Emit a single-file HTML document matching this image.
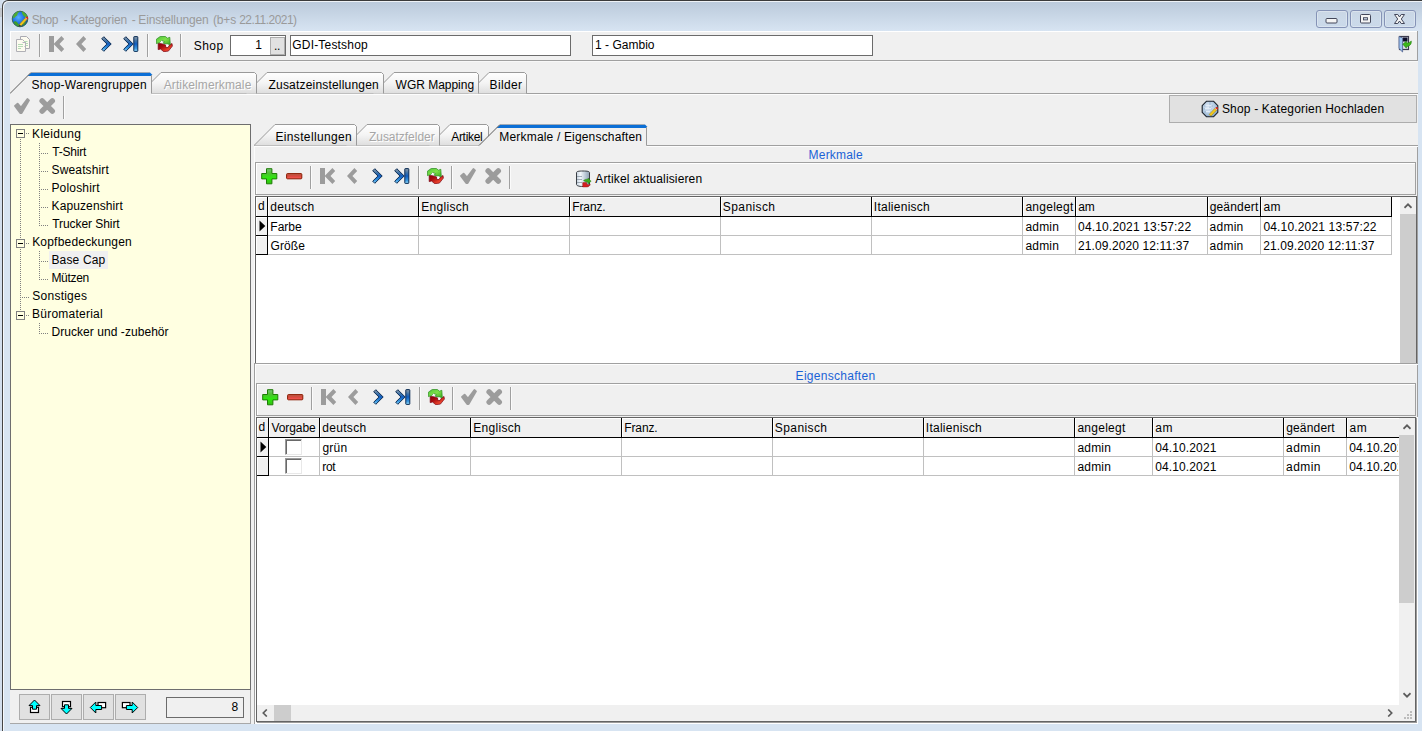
<!DOCTYPE html>
<html lang="de"><head><meta charset="utf-8"><title>Shop - Kategorien - Einstellungen</title>
<style>
html,body{margin:0;padding:0}
body{width:1422px;height:731px;overflow:hidden;position:relative;background:#d7e4f2;font:12px/14px "Liberation Sans",Arial,sans-serif;color:#000}
.a{position:absolute}
.t{position:absolute;white-space:nowrap;line-height:14px;height:14px}
.dis{color:#a6a6a6;text-shadow:1px 1px 0 #fff}
.inp{position:absolute;box-sizing:border-box;border:1px solid #6b6b6b;background:#fff}
.btn{position:absolute;box-sizing:border-box;border:1px solid #adadad;background:#e1e1e1}
.tbox{position:absolute;box-sizing:border-box;border:1px solid #a0a0a0;box-shadow:inset 1px 1px 0 #fff;background:#f0f0f0}
.grid{position:absolute;box-sizing:border-box;background:#fff;overflow:hidden}
.hc{position:absolute;box-sizing:border-box;background:#f0f0f0;border-right:1px solid #000;border-bottom:1px solid #000;box-shadow:inset 1px 1px 0 #fff}
.vl{position:absolute;width:1px;background:#c0c0c0}
.hl{position:absolute;height:1px;background:#c0c0c0}
.cb{position:absolute;box-sizing:border-box;width:17px;height:16px;background:#fff;border-top:1px solid #9a9a9a;border-left:1px solid #9a9a9a;border-right:1px solid #e8e8e8;border-bottom:1px solid #e8e8e8;box-shadow:inset 1px 1px 0 #696969}
</style></head><body>

<div class="a" style="left:0px;top:0px;width:2px;height:731px;background:#d2deed"></div>
<div class="a" style="left:0px;top:8px;width:2px;height:9px;background:#c3c7cd"></div>
<div class="a" style="left:2px;top:0;width:1430px;height:760px;box-sizing:border-box;border:1px solid #444;border-top-color:#3a3a3a;border-radius:6px 0 0 0;background:linear-gradient(#bccbdc 2px,#d7e4f2 30px);box-shadow:inset 1px 1px 0 rgba(255,255,255,.75)"></div>
<svg class="a" style="left:11px;top:10px" width="18" height="18" viewBox="0 0 18 18"><radialGradient id="gl" cx="0.4" cy="0.4" r="0.7"><stop offset="0" stop-color="#58b0ff"/><stop offset="0.6" stop-color="#1668e0"/><stop offset="1" stop-color="#0a3f9a"/></radialGradient><circle cx="9" cy="9" r="7.8" fill="url(#gl)" stroke="#2a5a3a" stroke-width="0.8"/><path d="M3 4.5C5 2 8 1.2 8.6 1.4 7 3 6 3.4 6.4 5 5.6 6.5 4.4 6 3.6 7.8 2 9 1.6 7 3 4.5z" fill="#4fae2e"/><path d="M10.5 1.5c3 .6 5.6 3 6 6.4-1.4 1.6-2 .2-3-1.4-1.2-.6-1.8-1.6-2.2-2.8z" fill="#4fae2e"/><path d="M2.6 12c1-1.4 2.6-.8 3.8.4.6 1.4 2 2 2.6 3.8-2.6.6-5.2-1.4-6.4-4.200z" fill="#3f9e28"/><path d="M12 13.5c1.2-.8 2.400-1 3.200-2.200-.4 2-1.800 3.600-3.600 4.600z" fill="#3f9e28"/><path d="M8.300 14.400 14.200 7.900 16 9.600 10 16z" fill="#f2c818" stroke="#a07808" stroke-width="0.5"/><path d="M14.200 7.900 15.400 6.700c.8-.4 2 .6 1.800 1.700L16 9.600z" fill="#e02818"/><path d="M14.500 7.600 16.300 9.300 16 9.600 14.200 7.900z" fill="#fff"/><path d="M8.300 14.400 7.700 16.600 10 16z" fill="#3a3a3a"/></svg>
<span class="t" id="ti1" style="top:13px;left:31.65px;letter-spacing:-0.405px;color:#9a9a9a;">Shop</span>
<span class="t" id="ti2" style="top:13px;left:63.86px;color:#9a9a9a;">-</span>
<span class="t" id="ti3" style="top:13px;left:70.6px;letter-spacing:-0.168px;color:#9a9a9a;">Kategorien</span>
<span class="t" id="ti4" style="top:13px;left:131.86px;color:#9a9a9a;">-</span>
<span class="t" id="ti5" style="top:13px;left:138.27px;letter-spacing:-0.130px;color:#9a9a9a;">Einstellungen</span>
<span class="t" id="ti6" style="top:13px;left:212.94px;letter-spacing:-0.117px;color:#9a9a9a;">(b+s</span>
<span class="t" id="ti7" style="top:13px;left:239.23px;letter-spacing:-0.528px;color:#9a9a9a;">22.11.2021)</span>
<div class="a" style="left:1316px;top:10px;width:32px;height:18px;box-sizing:border-box;border:1px solid #8593b6;border-radius:3px;background:linear-gradient(rgba(255,255,255,.10),rgba(255,255,255,0) 50%,rgba(120,150,190,.10));box-shadow:inset 0 0 0 1px rgba(255,255,255,.30)"><svg class="a" style="left:8px;top:6px" width="14" height="8" viewBox="0 0 14 8"><rect x="1" y="1.500" width="11" height="4.500" rx="1" fill="#f4f4f4" stroke="#43475a" stroke-width="1"/></svg></div>
<div class="a" style="left:1350px;top:10px;width:32px;height:18px;box-sizing:border-box;border:1px solid #8593b6;border-radius:3px;background:linear-gradient(rgba(255,255,255,.10),rgba(255,255,255,0) 50%,rgba(120,150,190,.10));box-shadow:inset 0 0 0 1px rgba(255,255,255,.30)"><svg class="a" style="left:8px;top:2px" width="14" height="12" viewBox="0 0 14 12"><rect x="1.500" y="1.500" width="10" height="8.500" rx="1" fill="#f4f4f4" stroke="#43475a" stroke-width="1"/><rect x="4.500" y="4.700" width="4" height="2.200" fill="#c9d6e6" stroke="#43475a" stroke-width="0.9"/></svg></div>
<div class="a" style="left:1384px;top:10px;width:32px;height:18px;box-sizing:border-box;border:1px solid #8593b6;border-radius:3px;background:linear-gradient(rgba(255,255,255,.10),rgba(255,255,255,0) 50%,rgba(120,150,190,.10));box-shadow:inset 0 0 0 1px rgba(255,255,255,.30)"><svg class="a" style="left:8px;top:2px" width="14" height="12" viewBox="0 0 14 12"><path d="M1.500 1.500h3.300L6.500 4l1.700-2.500h3.300L8.300 6l3.200 4.500H8.200L6.500 8l-1.700 2.500H1.500L4.700 6z" fill="#f4f4f4" stroke="#43475a" stroke-width="1" stroke-linejoin="round"/></svg></div>
<div class="a" style="left:10px;top:31px;width:1408px;height:693px;background:#f0f0f0"></div>
<div class="a" style="left:10px;top:723px;width:241px;height:1px;background:#a8a8a8"></div>
<div class="a" style="left:250px;top:690px;width:1px;height:33px;background:#a8a8a8"></div>
<div class="a" style="left:10px;top:31px;width:1408px;height:1px;background:#fff"></div>
<div class="a" style="left:10px;top:31px;width:1px;height:29px;background:#fff"></div>
<div class="a" style="left:10px;top:60px;width:1408px;height:1px;background:#a0a0a0"></div>
<div class="a" style="left:1417px;top:31px;width:1px;height:30px;background:#a0a0a0"></div>
<div class="a" style="left:10px;top:61px;width:1408px;height:1px;background:#f8f8f8"></div>
<svg class="a" style="left:16px;top:36px" width="15" height="16" viewBox="0 0 15 16"><path d="M4.500 0.500h6l3 3v9h-9z" fill="#fdfbf0" stroke="#aaaab2" stroke-width="1"/><path d="M0.500 3.500h6l3 3v9h-9z" fill="#fdfbf0" stroke="#b0b0b6" stroke-width="1"/><path d="M2 8.500h5M2 10.500h5M2 12.500h3M8 5.500h3.500M9.500 7.500h2.500M9.500 9.500h2.500" stroke="#b4dcb4" stroke-width="1"/><path d="M6.500 6.500h3v4h-1" fill="none" stroke="#b4b4bc" stroke-width="1"/></svg>
<div class="a" style="left:39px;top:34px;width:1px;height:23px;background:#a0a0a0"></div><div class="a" style="left:40px;top:34px;width:1px;height:23px;background:#fbfbfb"></div>
<svg class="a" style="left:49px;top:36px" width="16" height="16" viewBox="0 0 16 16"><path d="M0 0h5v16H0z M4.6 8 12.4 0l2.8 3-4.7 5 4.7 5-2.8 3z" fill="#9c9c9c"/></svg>
<svg class="a" style="left:76px;top:36px" width="16" height="16" viewBox="0 0 16 16"><path d="M0 8 7.4 0l2.8 3-4.8 5 4.8 5-2.8 3z" fill="#9c9c9c"/></svg>
<svg class="a" style="left:101px;top:36px" width="16" height="16" viewBox="0 0 16 16"><linearGradient id="bg1" x1="0" y1="0" x2="0" y2="1"><stop offset="0" stop-color="#929ca6"/><stop offset="0.3" stop-color="#3a70a8"/><stop offset="0.5" stop-color="#0f5cc0"/><stop offset="0.8" stop-color="#3a98e0"/><stop offset="1" stop-color="#9adcf8"/></linearGradient><path d="M0.7 2.8 2.8 0.7 10.200 8 2.8 15.300 0.7 13.200 5.900 8z" fill="url(#bg1)" stroke="#0a2c56" stroke-width="1" stroke-linejoin="round"/></svg>
<svg class="a" style="left:123px;top:36px" width="16" height="16" viewBox="0 0 16 16"><linearGradient id="bg2" x1="0" y1="0" x2="0" y2="1"><stop offset="0" stop-color="#929ca6"/><stop offset="0.3" stop-color="#3a70a8"/><stop offset="0.5" stop-color="#0f5cc0"/><stop offset="0.8" stop-color="#3a98e0"/><stop offset="1" stop-color="#9adcf8"/></linearGradient><path d="M0.7 2.8 2.8 0.7 10.200 8 2.8 15.300 0.7 13.200 5.900 8z" fill="url(#bg2)" stroke="#0a2c56" stroke-width="1" stroke-linejoin="round"/><rect x="10.800" y="0.600" width="4" height="14.800" rx="0.500" fill="url(#bg2)" stroke="#0a2c56" stroke-width="1"/></svg>
<div class="a" style="left:147px;top:34px;width:1px;height:23px;background:#a0a0a0"></div><div class="a" style="left:148px;top:34px;width:1px;height:23px;background:#fbfbfb"></div>
<svg class="a" style="left:156px;top:36px" width="17" height="16" viewBox="0 0 17 16"><linearGradient id="rg3a" x1="0" y1="0" x2="1" y2="1"><stop offset="0" stop-color="#4fc63a"/><stop offset="0.5" stop-color="#7fe04a"/><stop offset="1" stop-color="#3aa820"/></linearGradient><linearGradient id="rg3b" x1="0" y1="0" x2="1" y2="1"><stop offset="0" stop-color="#8a0008"/><stop offset="0.35" stop-color="#a80c10"/><stop offset="0.7" stop-color="#e8402a"/><stop offset="1" stop-color="#f06a50"/></linearGradient><path d="M2.2 7.2v6.4l2.4-.5 3.2 2.6 4.6-.6 4-5 -.4-2.6-2.6 1.6-1.4 2.4-2.6-.4.4-2-3.4-1.2z" fill="url(#rg3b)" stroke="#7a0010" stroke-width="0.7"/><path d="M0.4 3.2 4.2 0.5h5.2l2 1.7 2.4-.9.5 7.3-7.2-1.4 1.5-1.6-3-1-2 2-3.2 1z" fill="url(#rg3a)" stroke="#268a1c" stroke-width="0.7"/><circle cx="11.3" cy="9.6" r="1.1" fill="#fff"/><circle cx="5.6" cy="5.6" r="0.8" fill="#fff"/></svg>
<div class="a" style="left:180px;top:34px;width:1px;height:23px;background:#a0a0a0"></div><div class="a" style="left:181px;top:34px;width:1px;height:23px;background:#fbfbfb"></div>
<span class="t" id="shop" style="top:39px;left:193.66px;letter-spacing:0.470px;">Shop</span>
<div class="inp" style="left:230px;top:35px;width:56px;height:21px"></div>
<span class="t" id="one" style="top:38px;right:1160.06px;">1</span>
<div class="btn" style="left:270px;top:37px;width:15px;height:18px"></div>
<span class="t" id="dots" style="top:39px;left:274.05px;letter-spacing:-0.300px;">..</span>
<div class="inp" style="left:290px;top:35px;width:281px;height:21px"></div>
<span class="t" id="gdi" style="top:38px;left:292.3px;letter-spacing:0.184px;">GDI-Testshop</span>
<div class="inp" style="left:592px;top:35px;width:281px;height:21px"></div>
<span class="t" id="gambio" style="top:38px;left:595.09px;letter-spacing:0.005px;">1 - Gambio</span>
<svg class="a" style="left:1398px;top:35px" width="15" height="18" viewBox="0 0 15 18"><rect x="1.500" y="1.500" width="9" height="13" fill="#dfe3ea" stroke="#3c3c50" stroke-width="1.200"/><rect x="4.800" y="2.500" width="4.700" height="4" fill="#0c0c28"/><path d="M1 1.500 4.600 3v14L1 13.500z" fill="#9ec6f0" stroke="#4a5a8a" stroke-width="0.800"/><path d="M4.800 9.200 8.400 6.200v1.700c2 0 4-.6 4.800-2 .6 3.400-1.800 5.600-4.800 5.600v1.700z" fill="#3cb81a" stroke="#1c7a08" stroke-width="0.600"/></svg>
<svg class="a" style="left:10px;top:70px" width="1408" height="26" viewBox="10 70 1408 26"><linearGradient id="tg70" x1="0" y1="0" x2="0" y2="1"><stop offset="0" stop-color="#ffffff"/><stop offset="0.5" stop-color="#f4f4f4"/><stop offset="1" stop-color="#dedede"/></linearGradient><path d="M10 93.5H1418" stroke="#a0a0a0" stroke-width="1" fill="none"/><path d="M10 94.5H1418" stroke="#fdfdfd" stroke-width="1" fill="none"/><path d="M468 93.5 L489 72.5 H524.5 L526.5 74.5 V93.5Z" fill="url(#tg70)" stroke="none"/><path d="M468 93.5 L489 72.5 H524.5 L526.5 74.5 V93.5" fill="none" stroke="#9a9a9a" stroke-width="1"/><path d="M373 93.5 L394 72.5 H476.5 L478.5 74.5 V93.5Z" fill="url(#tg70)" stroke="none"/><path d="M373 93.5 L394 72.5 H476.5 L478.5 74.5 V93.5" fill="none" stroke="#9a9a9a" stroke-width="1"/><path d="M246 93.5 L267 72.5 H381.5 L383.5 74.5 V93.5Z" fill="url(#tg70)" stroke="none"/><path d="M246 93.5 L267 72.5 H381.5 L383.5 74.5 V93.5" fill="none" stroke="#9a9a9a" stroke-width="1"/><path d="M140 93.5 L161 72.5 H254.5 L256.5 74.5 V93.5Z" fill="url(#tg70)" stroke="none"/><path d="M140 93.5 L161 72.5 H254.5 L256.5 74.5 V93.5" fill="none" stroke="#9a9a9a" stroke-width="1"/><path d="M10 93.5 L31 72.5 H149.5 L151.5 74.5 V93.5 V95 H9Z" fill="#f0f0f0" stroke="none"/><path d="M27.5 76 L31.5 72.5 H150 L152 74.5 V76Z" fill="#0b6fd6"/><path d="M10 93.5 L31 72.5" fill="none" stroke="#5c5c5c" stroke-width="1"/><path d="M31 72.5 H149.5" fill="none" stroke="#b9a99a" stroke-width="1" opacity="0.6"/><path d="M151.5 75 V93.5" fill="none" stroke="#9a9a9a" stroke-width="1"/></svg>
<span class="t" id="tab1" style="top:78px;left:31.52px;letter-spacing:0.260px;">Shop-Warengruppen</span>
<span class="t dis" id="tab2" style="top:78px;left:163.69px;letter-spacing:0.114px;">Artikelmerkmale</span>
<span class="t" id="tab3" style="top:78px;left:268.52px;letter-spacing:0.190px;">Zusatzeinstellungen</span>
<span class="t" id="tab4" style="top:78px;left:395.58px;letter-spacing:-0.020px;">WGR Mapping</span>
<span class="t" id="tab5" style="top:78px;left:489.62px;letter-spacing:0.345px;">Bilder</span>
<svg class="a" style="left:14px;top:98px" width="16" height="16" viewBox="0 0 16 16"><path d="M1 8 3.6 5.6 7 9.6 13.4 1 15 2.4 7.6 15 6.2 15z" fill="#9c9c9c" stroke="#9c9c9c" stroke-width="1.8" stroke-linejoin="round"/></svg>
<svg class="a" style="left:39px;top:98px" width="17" height="16" viewBox="0 0 17 16"><path d="M3.1 2.9 13.3 13.100M13.3 2.9 3.1 13.100" fill="none" stroke="#9c9c9c" stroke-width="5.4" stroke-linecap="round"/></svg>
<div class="a" style="left:63px;top:96px;width:1px;height:23px;background:#a0a0a0"></div><div class="a" style="left:64px;top:96px;width:1px;height:23px;background:#fbfbfb"></div>
<div class="btn" style="left:1169px;top:95px;width:248px;height:28px"></div>
<svg class="a" style="left:1201px;top:100px" width="18" height="18" viewBox="0 0 18 18"><radialGradient id="gb" cx="0.4" cy="0.35" r="0.7"><stop offset="0" stop-color="#e4eefa"/><stop offset="0.7" stop-color="#a9c3dc"/><stop offset="1" stop-color="#7f9fc0"/></radialGradient><path d="M5.600 1.200h6.800l4.400 4.400v6.800l-4.400 4.400H5.600L1.200 12.400V5.600z" fill="url(#gb)" stroke="#1c222c" stroke-width="1.100" stroke-linejoin="round"/><path d="M3 6h9M2.600 9h8M3.400 12h6M9 2v8" stroke="#8aa6c4" stroke-width="0.700" fill="none"/><path d="M4.500 5h6v1.600h-6zM4 8h6v1.600H4zM5 11h4v1.400H5z" fill="#eef4fb" opacity=".8"/><path d="M8.200 14.400 14 8.200l1.800 1.700L10 16.100z" fill="#f0c81c" stroke="#9c7a0a" stroke-width="0.500"/><path d="M14 8.200 15.200 7c.9-.4 2 .6 1.800 1.700l-1.200 1.200z" fill="#d82818"/><path d="M14.300 7.900 16.100 9.600 15.800 9.900 14 8.200z" fill="#fff"/></svg>
<span class="t" id="upl" style="top:102px;left:1221.9px;letter-spacing:0.183px;">Shop - Kategorien Hochladen</span>
<div class="a" style="left:10px;top:124px;width:241px;height:566px;box-sizing:border-box;background:#ffffe1;border:1px solid #6e6e6e"></div>
<div class="a" style="left:49px;top:251px;width:59px;height:18px;background:#f0f0f0"></div>
<span class="t" id="tr0" style="top:127px;left:32.09px;letter-spacing:0.309px;">Kleidung</span>
<span class="t" id="tr1" style="top:145px;left:52.19px;letter-spacing:-0.182px;">T-Shirt</span>
<span class="t" id="tr2" style="top:163px;left:51.6px;letter-spacing:0.130px;">Sweatshirt</span>
<span class="t" id="tr3" style="top:181px;left:51.43px;letter-spacing:0.187px;">Poloshirt</span>
<span class="t" id="tr4" style="top:199px;left:51.55px;letter-spacing:0.106px;">Kapuzenshirt</span>
<span class="t" id="tr5" style="top:217px;left:52.19px;letter-spacing:-0.061px;">Trucker Shirt</span>
<span class="t" id="tr6" style="top:235px;left:32.17px;letter-spacing:0.203px;">Kopfbedeckungen</span>
<span class="t" id="tr7" style="top:253px;left:51.42px;letter-spacing:0.163px;">Base Cap</span>
<span class="t" id="tr8" style="top:271px;left:51.43px;letter-spacing:-0.300px;">Mützen</span>
<span class="t" id="tr9" style="top:289px;left:32.36px;letter-spacing:0.231px;">Sonstiges</span>
<span class="t" id="tr10" style="top:307px;left:32.06px;letter-spacing:0.231px;">Büromaterial</span>
<span class="t" id="tr11" style="top:325px;left:51.43px;letter-spacing:0.059px;">Drucker und -zubehör</span>
<svg class="a" style="left:10px;top:124px" width="60" height="230" viewBox="10 124 60 230" shape-rendering="crispEdges"><path d="M20.5 139V238" stroke="#808080" stroke-width="1" stroke-dasharray="1 1" fill="none"/><path d="M20.5 249V310" stroke="#808080" stroke-width="1" stroke-dasharray="1 1" fill="none"/><rect x="16.5" y="129.5" width="8" height="8" fill="#ffffe1" stroke="#808080" stroke-width="1"/><path d="M18 133.5H23" stroke="#000" stroke-width="1"/><path d="M26 133.5H29" stroke="#808080" stroke-width="1" stroke-dasharray="1 1" fill="none"/><rect x="16.5" y="239.5" width="8" height="8" fill="#ffffe1" stroke="#808080" stroke-width="1"/><path d="M18 243.5H23" stroke="#000" stroke-width="1"/><path d="M26 243.5H29" stroke="#808080" stroke-width="1" stroke-dasharray="1 1" fill="none"/><rect x="16.5" y="311.5" width="8" height="8" fill="#ffffe1" stroke="#808080" stroke-width="1"/><path d="M18 315.5H23" stroke="#000" stroke-width="1"/><path d="M26 315.5H29" stroke="#808080" stroke-width="1" stroke-dasharray="1 1" fill="none"/><path d="M20 297.5H29" stroke="#808080" stroke-width="1" stroke-dasharray="1 1" fill="none"/><path d="M39.5 143V226" stroke="#808080" stroke-width="1" stroke-dasharray="1 1" fill="none"/><path d="M39 153.5H48" stroke="#808080" stroke-width="1" stroke-dasharray="1 1" fill="none"/><path d="M39 171.5H48" stroke="#808080" stroke-width="1" stroke-dasharray="1 1" fill="none"/><path d="M39 189.5H48" stroke="#808080" stroke-width="1" stroke-dasharray="1 1" fill="none"/><path d="M39 207.5H48" stroke="#808080" stroke-width="1" stroke-dasharray="1 1" fill="none"/><path d="M39 225.5H48" stroke="#808080" stroke-width="1" stroke-dasharray="1 1" fill="none"/><path d="M39.5 251V280" stroke="#808080" stroke-width="1" stroke-dasharray="1 1" fill="none"/><path d="M39 261.5H48" stroke="#808080" stroke-width="1" stroke-dasharray="1 1" fill="none"/><path d="M39 279.5H48" stroke="#808080" stroke-width="1" stroke-dasharray="1 1" fill="none"/><path d="M39.5 323V334" stroke="#808080" stroke-width="1" stroke-dasharray="1 1" fill="none"/><path d="M39 333.5H48" stroke="#808080" stroke-width="1" stroke-dasharray="1 1" fill="none"/></svg>
<div class="btn" style="left:19px;top:694px;width:31px;height:26px"></div>
<div class="btn" style="left:51px;top:694px;width:31px;height:26px"></div>
<div class="btn" style="left:83px;top:694px;width:31px;height:26px"></div>
<div class="btn" style="left:115px;top:694px;width:31px;height:26px"></div>
<svg class="a" style="left:19px;top:694px" width="128" height="26" viewBox="19 694 128 26"><g stroke="#000" stroke-width="1.200" stroke-linejoin="miter"><rect x="30.500" y="707.300" width="8" height="5.200" fill="#fff"/><path d="M34.500 700 40 705.600H36.500V709.200H32.500V705.600H29z" fill="#00ffff" stroke-width="1"/><rect x="62.500" y="701.500" width="8" height="5.200" fill="#fff"/><path d="M66.500 714 72 708.400H68.500V704.800H64.500V708.400H61z" fill="#00ffff" stroke-width="1"/><rect x="98" y="702.500" width="7.600" height="5.200" fill="#fff"/><path d="M90.300 707.500 95.800 702V705.500H101.600V709.500H95.800V713z" fill="#00ffff" stroke-width="1"/><rect x="122.400" y="702.500" width="7.600" height="5.200" fill="#fff"/><path d="M137.700 707.500 132.200 702V705.500H126.400V709.500H132.200V713z" fill="#00ffff" stroke-width="1"/></g></svg>
<div class="a" style="left:166px;top:697px;width:78px;height:21px;box-sizing:border-box;border:1px solid #6b6b6b;background:#f0f0f0"></div>
<span class="t" id="eight" style="top:700px;right:1183.87px;">8</span>
<div class="a" style="left:254px;top:146px;width:1px;height:217px;background:#fbfbfb"></div>
<div class="a" style="left:254px;top:363px;width:1px;height:361px;background:#a0a0a0"></div>
<div class="a" style="left:255px;top:364px;width:1px;height:360px;background:#fdfdfd"></div>
<div class="a" style="left:1417px;top:146px;width:1px;height:578px;background:#a0a0a0"></div>
<svg class="a" style="left:254px;top:122px" width="1164" height="26" viewBox="254 122 1164 26"><linearGradient id="tg122" x1="0" y1="0" x2="0" y2="1"><stop offset="0" stop-color="#ffffff"/><stop offset="0.5" stop-color="#f4f4f4"/><stop offset="1" stop-color="#dedede"/></linearGradient><path d="M254 145.5H1418" stroke="#a0a0a0" stroke-width="1" fill="none"/><path d="M254 146.5H1418" stroke="#fdfdfd" stroke-width="1" fill="none"/><path d="M429 145.5 L450 124.5 H486.5 L488.5 126.5 V145.5Z" fill="url(#tg122)" stroke="none"/><path d="M429 145.5 L450 124.5 H486.5 L488.5 126.5 V145.5" fill="none" stroke="#9a9a9a" stroke-width="1"/><path d="M346 145.5 L367 124.5 H437.5 L439.5 126.5 V145.5Z" fill="url(#tg122)" stroke="none"/><path d="M346 145.5 L367 124.5 H437.5 L439.5 126.5 V145.5" fill="none" stroke="#9a9a9a" stroke-width="1"/><path d="M254 145.5 L275 124.5 H354.5 L356.5 126.5 V145.5Z" fill="url(#tg122)" stroke="none"/><path d="M254 145.5 L275 124.5 H354.5 L356.5 126.5 V145.5" fill="none" stroke="#9a9a9a" stroke-width="1"/><path d="M479 145.5 L500 124.5 H644.5 L646.5 126.5 V145.5 V147 H478Z" fill="#f0f0f0" stroke="none"/><path d="M496.5 128 L500.5 124.5 H645 L647 126.5 V128Z" fill="#0b6fd6"/><path d="M479 145.5 L500 124.5" fill="none" stroke="#5c5c5c" stroke-width="1"/><path d="M500 124.5 H644.5" fill="none" stroke="#b9a99a" stroke-width="1" opacity="0.6"/><path d="M646.5 127 V145.5" fill="none" stroke="#9a9a9a" stroke-width="1"/></svg>
<span class="t" id="it1" style="top:130px;left:275.45px;letter-spacing:0.349px;">Einstellungen</span>
<span class="t dis" id="it2" style="top:130px;left:368.94px;letter-spacing:-0.024px;">Zusatzfelder</span>
<span class="t" id="it3" style="top:130px;left:451.21px;letter-spacing:-0.300px;">Artikel</span>
<span class="t" id="it4" style="top:130px;left:499.36px;letter-spacing:0.171px;">Merkmale / Eigenschaften</span>
<span class="t" id="lbl1" style="top:148px;left:808.6px;letter-spacing:0.194px;color:#1a62d6;">Merkmale</span>
<span class="t" id="lbl2" style="top:369px;left:795.6px;letter-spacing:0.287px;color:#1a62d6;">Eigenschaften</span>
<div class="tbox" style="left:255px;top:162px;width:1161px;height:33px"></div>
<svg class="a" style="left:261px;top:168px" width="17" height="17" viewBox="0 0 17 17"><linearGradient id="pg4" x1="0" y1="0" x2="0" y2="1"><stop offset="0" stop-color="#7cc47a"/><stop offset="0.3" stop-color="#4cc030"/><stop offset="0.62" stop-color="#2cea0c"/><stop offset="1" stop-color="#34bc14"/></linearGradient><path d="M5.5 0.7h5.4v4.8h4.9v5.4h-4.9v4.9H5.5v-4.9H0.7V5.5h4.8z" fill="url(#pg4)" stroke="#1d7d04" stroke-width="1" stroke-linejoin="round"/></svg>
<svg class="a" style="left:286px;top:173px" width="17" height="7" viewBox="0 0 17 7"><linearGradient id="mg5" x1="0" y1="0" x2="0" y2="1"><stop offset="0" stop-color="#b8644c"/><stop offset="0.45" stop-color="#d4483c"/><stop offset="1" stop-color="#ff5a58"/></linearGradient><rect x="0.6" y="0.6" width="15.2" height="5.2" rx="0.8" fill="url(#mg5)" stroke="#8a1c02" stroke-width="1"/></svg>
<div class="a" style="left:310px;top:166px;width:1px;height:23px;background:#a0a0a0"></div><div class="a" style="left:311px;top:166px;width:1px;height:23px;background:#fbfbfb"></div>
<svg class="a" style="left:320px;top:168px" width="16" height="16" viewBox="0 0 16 16"><path d="M0 0h5v16H0z M4.6 8 12.4 0l2.8 3-4.7 5 4.7 5-2.8 3z" fill="#9c9c9c"/></svg>
<svg class="a" style="left:347px;top:168px" width="16" height="16" viewBox="0 0 16 16"><path d="M0 8 7.4 0l2.8 3-4.8 5 4.8 5-2.8 3z" fill="#9c9c9c"/></svg>
<svg class="a" style="left:372px;top:168px" width="16" height="16" viewBox="0 0 16 16"><linearGradient id="bg6" x1="0" y1="0" x2="0" y2="1"><stop offset="0" stop-color="#929ca6"/><stop offset="0.3" stop-color="#3a70a8"/><stop offset="0.5" stop-color="#0f5cc0"/><stop offset="0.8" stop-color="#3a98e0"/><stop offset="1" stop-color="#9adcf8"/></linearGradient><path d="M0.7 2.8 2.8 0.7 10.200 8 2.8 15.300 0.7 13.200 5.900 8z" fill="url(#bg6)" stroke="#0a2c56" stroke-width="1" stroke-linejoin="round"/></svg>
<svg class="a" style="left:394px;top:168px" width="16" height="16" viewBox="0 0 16 16"><linearGradient id="bg7" x1="0" y1="0" x2="0" y2="1"><stop offset="0" stop-color="#929ca6"/><stop offset="0.3" stop-color="#3a70a8"/><stop offset="0.5" stop-color="#0f5cc0"/><stop offset="0.8" stop-color="#3a98e0"/><stop offset="1" stop-color="#9adcf8"/></linearGradient><path d="M0.7 2.8 2.8 0.7 10.200 8 2.8 15.300 0.7 13.200 5.900 8z" fill="url(#bg7)" stroke="#0a2c56" stroke-width="1" stroke-linejoin="round"/><rect x="10.800" y="0.600" width="4" height="14.800" rx="0.500" fill="url(#bg7)" stroke="#0a2c56" stroke-width="1"/></svg>
<div class="a" style="left:418px;top:166px;width:1px;height:23px;background:#a0a0a0"></div><div class="a" style="left:419px;top:166px;width:1px;height:23px;background:#fbfbfb"></div>
<svg class="a" style="left:427px;top:168px" width="17" height="16" viewBox="0 0 17 16"><linearGradient id="rg8a" x1="0" y1="0" x2="1" y2="1"><stop offset="0" stop-color="#4fc63a"/><stop offset="0.5" stop-color="#7fe04a"/><stop offset="1" stop-color="#3aa820"/></linearGradient><linearGradient id="rg8b" x1="0" y1="0" x2="1" y2="1"><stop offset="0" stop-color="#8a0008"/><stop offset="0.35" stop-color="#a80c10"/><stop offset="0.7" stop-color="#e8402a"/><stop offset="1" stop-color="#f06a50"/></linearGradient><path d="M2.2 7.2v6.4l2.4-.5 3.2 2.6 4.6-.6 4-5 -.4-2.6-2.6 1.6-1.4 2.4-2.6-.4.4-2-3.4-1.2z" fill="url(#rg8b)" stroke="#7a0010" stroke-width="0.7"/><path d="M0.4 3.2 4.2 0.5h5.2l2 1.7 2.4-.9.5 7.3-7.2-1.4 1.5-1.6-3-1-2 2-3.2 1z" fill="url(#rg8a)" stroke="#268a1c" stroke-width="0.7"/><circle cx="11.3" cy="9.6" r="1.1" fill="#fff"/><circle cx="5.6" cy="5.6" r="0.8" fill="#fff"/></svg>
<div class="a" style="left:451px;top:166px;width:1px;height:23px;background:#a0a0a0"></div><div class="a" style="left:452px;top:166px;width:1px;height:23px;background:#fbfbfb"></div>
<svg class="a" style="left:460px;top:168px" width="16" height="16" viewBox="0 0 16 16"><path d="M1 8 3.6 5.6 7 9.6 13.4 1 15 2.4 7.6 15 6.2 15z" fill="#9c9c9c" stroke="#9c9c9c" stroke-width="1.8" stroke-linejoin="round"/></svg>
<svg class="a" style="left:485px;top:168px" width="17" height="16" viewBox="0 0 17 16"><path d="M3.1 2.9 13.3 13.100M13.3 2.9 3.1 13.100" fill="none" stroke="#9c9c9c" stroke-width="5.4" stroke-linecap="round"/></svg>
<div class="a" style="left:509px;top:166px;width:1px;height:23px;background:#a0a0a0"></div><div class="a" style="left:510px;top:166px;width:1px;height:23px;background:#fbfbfb"></div>
<svg class="a" style="left:575px;top:170px" width="17" height="18" viewBox="0 0 17 18"><linearGradient id="db" x1="0" y1="0" x2="1" y2="0"><stop offset="0" stop-color="#c4d0dc"/><stop offset="0.3" stop-color="#f4f8fc"/><stop offset="0.7" stop-color="#b8c6d4"/><stop offset="1" stop-color="#8fa0b2"/></linearGradient><path d="M1.500 2.500c0-1 2-1.500 6.500-1.500s6.500.5 6.500 1.500v12c0 1-2 2-6.500 2s-6.500-1-6.500-2z" fill="url(#db)" stroke="#3a3e44" stroke-width="1"/><path d="M2 6.500h5M2 9.500h5M2 12.500h5" stroke="#8c98a6" stroke-width="0.800"/><path d="M8.500 10.500c1.500-1.200 3-1.500 4.500-1.200V8l3.200 3.200-3.200 2.600v-1.500c-1.500-.5-3 -.4-4.500-1.800z" fill="#3caa1c" stroke="#1c7a08" stroke-width="0.400"/><path d="M7.700 17V12.600h4v1.500c1 .8 2.400.8 3.600.2-.5 1.800-1.800 2.700-3.600 2.700z" fill="#d42020" stroke="#8c0c0c" stroke-width="0.400"/></svg>
<span class="t" id="artakt" style="top:172px;left:595.25px;letter-spacing:0.140px;">Artikel aktualisieren</span>
<div class="tbox" style="left:256px;top:383px;width:1160px;height:33px"></div>
<svg class="a" style="left:262px;top:389px" width="17" height="17" viewBox="0 0 17 17"><linearGradient id="pg9" x1="0" y1="0" x2="0" y2="1"><stop offset="0" stop-color="#7cc47a"/><stop offset="0.3" stop-color="#4cc030"/><stop offset="0.62" stop-color="#2cea0c"/><stop offset="1" stop-color="#34bc14"/></linearGradient><path d="M5.5 0.7h5.4v4.8h4.9v5.4h-4.9v4.9H5.5v-4.9H0.7V5.5h4.8z" fill="url(#pg9)" stroke="#1d7d04" stroke-width="1" stroke-linejoin="round"/></svg>
<svg class="a" style="left:287px;top:394px" width="17" height="7" viewBox="0 0 17 7"><linearGradient id="mg10" x1="0" y1="0" x2="0" y2="1"><stop offset="0" stop-color="#b8644c"/><stop offset="0.45" stop-color="#d4483c"/><stop offset="1" stop-color="#ff5a58"/></linearGradient><rect x="0.6" y="0.6" width="15.2" height="5.2" rx="0.8" fill="url(#mg10)" stroke="#8a1c02" stroke-width="1"/></svg>
<div class="a" style="left:311px;top:387px;width:1px;height:23px;background:#a0a0a0"></div><div class="a" style="left:312px;top:387px;width:1px;height:23px;background:#fbfbfb"></div>
<svg class="a" style="left:321px;top:389px" width="16" height="16" viewBox="0 0 16 16"><path d="M0 0h5v16H0z M4.6 8 12.4 0l2.8 3-4.7 5 4.7 5-2.8 3z" fill="#9c9c9c"/></svg>
<svg class="a" style="left:348px;top:389px" width="16" height="16" viewBox="0 0 16 16"><path d="M0 8 7.4 0l2.8 3-4.8 5 4.8 5-2.8 3z" fill="#9c9c9c"/></svg>
<svg class="a" style="left:373px;top:389px" width="16" height="16" viewBox="0 0 16 16"><linearGradient id="bg11" x1="0" y1="0" x2="0" y2="1"><stop offset="0" stop-color="#929ca6"/><stop offset="0.3" stop-color="#3a70a8"/><stop offset="0.5" stop-color="#0f5cc0"/><stop offset="0.8" stop-color="#3a98e0"/><stop offset="1" stop-color="#9adcf8"/></linearGradient><path d="M0.7 2.8 2.8 0.7 10.200 8 2.8 15.300 0.7 13.200 5.900 8z" fill="url(#bg11)" stroke="#0a2c56" stroke-width="1" stroke-linejoin="round"/></svg>
<svg class="a" style="left:395px;top:389px" width="16" height="16" viewBox="0 0 16 16"><linearGradient id="bg12" x1="0" y1="0" x2="0" y2="1"><stop offset="0" stop-color="#929ca6"/><stop offset="0.3" stop-color="#3a70a8"/><stop offset="0.5" stop-color="#0f5cc0"/><stop offset="0.8" stop-color="#3a98e0"/><stop offset="1" stop-color="#9adcf8"/></linearGradient><path d="M0.7 2.8 2.8 0.7 10.200 8 2.8 15.300 0.7 13.200 5.900 8z" fill="url(#bg12)" stroke="#0a2c56" stroke-width="1" stroke-linejoin="round"/><rect x="10.800" y="0.600" width="4" height="14.800" rx="0.500" fill="url(#bg12)" stroke="#0a2c56" stroke-width="1"/></svg>
<div class="a" style="left:419px;top:387px;width:1px;height:23px;background:#a0a0a0"></div><div class="a" style="left:420px;top:387px;width:1px;height:23px;background:#fbfbfb"></div>
<svg class="a" style="left:428px;top:389px" width="17" height="16" viewBox="0 0 17 16"><linearGradient id="rg13a" x1="0" y1="0" x2="1" y2="1"><stop offset="0" stop-color="#4fc63a"/><stop offset="0.5" stop-color="#7fe04a"/><stop offset="1" stop-color="#3aa820"/></linearGradient><linearGradient id="rg13b" x1="0" y1="0" x2="1" y2="1"><stop offset="0" stop-color="#8a0008"/><stop offset="0.35" stop-color="#a80c10"/><stop offset="0.7" stop-color="#e8402a"/><stop offset="1" stop-color="#f06a50"/></linearGradient><path d="M2.2 7.2v6.4l2.4-.5 3.2 2.6 4.6-.6 4-5 -.4-2.6-2.6 1.6-1.4 2.4-2.6-.4.4-2-3.4-1.2z" fill="url(#rg13b)" stroke="#7a0010" stroke-width="0.7"/><path d="M0.4 3.2 4.2 0.5h5.2l2 1.7 2.4-.9.5 7.3-7.2-1.4 1.5-1.6-3-1-2 2-3.2 1z" fill="url(#rg13a)" stroke="#268a1c" stroke-width="0.7"/><circle cx="11.3" cy="9.6" r="1.1" fill="#fff"/><circle cx="5.6" cy="5.6" r="0.8" fill="#fff"/></svg>
<div class="a" style="left:452px;top:387px;width:1px;height:23px;background:#a0a0a0"></div><div class="a" style="left:453px;top:387px;width:1px;height:23px;background:#fbfbfb"></div>
<svg class="a" style="left:461px;top:389px" width="16" height="16" viewBox="0 0 16 16"><path d="M1 8 3.6 5.6 7 9.6 13.4 1 15 2.4 7.6 15 6.2 15z" fill="#9c9c9c" stroke="#9c9c9c" stroke-width="1.8" stroke-linejoin="round"/></svg>
<svg class="a" style="left:486px;top:389px" width="17" height="16" viewBox="0 0 17 16"><path d="M3.1 2.9 13.3 13.100M13.3 2.9 3.1 13.100" fill="none" stroke="#9c9c9c" stroke-width="5.4" stroke-linecap="round"/></svg>
<div class="a" style="left:510px;top:387px;width:1px;height:23px;background:#a0a0a0"></div><div class="a" style="left:511px;top:387px;width:1px;height:23px;background:#fbfbfb"></div>
<div class="a" style="left:255px;top:363px;width:1163px;height:1px;background:#a0a0a0"></div>
<div class="a" style="left:255px;top:364px;width:1163px;height:1px;background:#fdfdfd"></div>
<div class="grid" style="left:255px;top:196px;width:1162px;height:167px;border-left:1px solid #646464;border-top:1px solid #646464;border-right:1px solid #646464"></div>
<div class="hc" style="left:256px;top:197px;width:12px;height:20px"></div>
<span class="t" id="uh0" style="top:199px;left:258.03px;">d</span>
<div class="hc" style="left:268px;top:197px;width:151px;height:20px"></div>
<span class="t" id="uh1" style="top:200px;left:270.2px;letter-spacing:0.320px;">deutsch</span>
<div class="vl" style="left:418px;top:217px;height:38px"></div>
<div class="hc" style="left:419px;top:197px;width:151px;height:20px"></div>
<span class="t" id="uh2" style="top:200px;left:421.29px;letter-spacing:0.297px;">Englisch</span>
<div class="vl" style="left:569px;top:217px;height:38px"></div>
<div class="hc" style="left:570px;top:197px;width:151px;height:20px"></div>
<span class="t" id="uh3" style="top:200px;left:572.29px;letter-spacing:-0.132px;">Franz.</span>
<div class="vl" style="left:720px;top:217px;height:38px"></div>
<div class="hc" style="left:721px;top:197px;width:151px;height:20px"></div>
<span class="t" id="uh4" style="top:200px;left:722.84px;letter-spacing:0.402px;">Spanisch</span>
<div class="vl" style="left:871px;top:217px;height:38px"></div>
<div class="hc" style="left:872px;top:197px;width:151px;height:20px"></div>
<span class="t" id="uh5" style="top:200px;left:873.86px;letter-spacing:0.251px;">Italienisch</span>
<div class="vl" style="left:1022px;top:217px;height:38px"></div>
<div class="hc" style="left:1023px;top:197px;width:53px;height:20px"></div>
<span class="t" id="uh6" style="top:200px;left:1025.46px;letter-spacing:0.248px;">angelegt</span>
<div class="vl" style="left:1075px;top:217px;height:38px"></div>
<div class="hc" style="left:1076px;top:197px;width:132px;height:20px"></div>
<span class="t" id="uh7" style="top:200px;left:1078.32px;letter-spacing:-0.128px;">am</span>
<div class="vl" style="left:1207px;top:217px;height:38px"></div>
<div class="hc" style="left:1208px;top:197px;width:53px;height:20px"></div>
<span class="t" id="uh8" style="top:200px;left:1209.67px;letter-spacing:0.183px;">geändert</span>
<div class="vl" style="left:1260px;top:217px;height:38px"></div>
<div class="hc" style="left:1261px;top:197px;width:131px;height:20px"></div>
<span class="t" id="uh9" style="top:200px;left:1263.51px;letter-spacing:0.253px;">am</span>
<div class="vl" style="left:1391px;top:217px;height:38px"></div>
<div class="hc" style="left:256px;top:217px;width:12px;height:19px"></div>
<div class="hl" style="left:268px;top:235px;width:1124px"></div>
<div class="hc" style="left:256px;top:236px;width:12px;height:19px"></div>
<div class="hl" style="left:268px;top:254px;width:1124px"></div>
<svg class="a" style="left:259px;top:220px" width="7" height="12" viewBox="0 0 7 12"><path d="M0.500 0.500 6.300 6 0.500 11.500z" fill="#000"/></svg>
<span class="t" id="u0a" style="top:220px;left:270.34px;letter-spacing:-0.026px;">Farbe</span>
<span class="t" id="u0b" style="top:220px;left:1025.5px;letter-spacing:0.168px;">admin</span>
<span class="t" id="u0c" style="top:220px;left:1078.05px;letter-spacing:0.165px;">04.10.2021 13:57:22</span>
<span class="t" id="u0d" style="top:220px;left:1209.54px;letter-spacing:0.256px;">admin</span>
<span class="t" id="u0e" style="top:220px;left:1263.44px;letter-spacing:0.163px;">04.10.2021 13:57:22</span>
<span class="t" id="u1a" style="top:239px;left:270.62px;letter-spacing:0.063px;">Größe</span>
<span class="t" id="u1b" style="top:239px;left:1025.5px;letter-spacing:0.168px;">admin</span>
<span class="t" id="u1c" style="top:239px;left:1077.9px;letter-spacing:0.113px;">21.09.2020 12:11:37</span>
<span class="t" id="u1d" style="top:239px;left:1209.54px;letter-spacing:0.256px;">admin</span>
<span class="t" id="u1e" style="top:239px;left:1263.19px;letter-spacing:0.111px;">21.09.2020 12:11:37</span>
<div class="a" style="left:1400px;top:197px;width:16px;height:166px;background:#f0f0f0"></div>
<div class="a" style="left:1400px;top:214px;width:16px;height:149px;background:#cdcdcd"></div>
<svg class="a" style="left:1404px;top:203px" width="8" height="6" viewBox="0 0 8 6"><path d="M0.500 4.800 4 1.300 7.500 4.800" fill="none" stroke="#5c5c5c" stroke-width="1.700"/></svg>
<div class="grid" style="left:256px;top:417px;width:1160px;height:305px;border:1px solid #646464"></div>
<div class="a" style="left:1416px;top:418px;width:1px;height:305px;background:#9a9a9a"></div>
<div class="a" style="left:1417px;top:417px;width:1px;height:307px;background:#fff"></div>
<div class="a" style="left:257px;top:722px;width:1160px;height:1px;background:#9a9a9a"></div>
<div class="a" style="left:255px;top:723px;width:1163px;height:1px;background:#fff"></div>
<div class="hc" style="left:257px;top:418px;width:12px;height:20px;"></div>
<span class="t" id="lh0" style="top:420px;left:258.44px;">d</span>
<div class="hc" style="left:269px;top:418px;width:51px;height:20px;"></div>
<span class="t" id="lh1" style="top:421px;left:271.41px;letter-spacing:-0.058px;">Vorgabe</span>
<div class="vl" style="left:319px;top:438px;height:38px"></div>
<div class="hc" style="left:320px;top:418px;width:151px;height:20px;"></div>
<span class="t" id="lh2" style="top:421px;left:322.2px;letter-spacing:0.320px;">deutsch</span>
<div class="vl" style="left:470px;top:438px;height:38px"></div>
<div class="hc" style="left:471px;top:418px;width:151px;height:20px;"></div>
<span class="t" id="lh3" style="top:421px;left:473.29px;letter-spacing:0.297px;">Englisch</span>
<div class="vl" style="left:621px;top:438px;height:38px"></div>
<div class="hc" style="left:622px;top:418px;width:151px;height:20px;"></div>
<span class="t" id="lh4" style="top:421px;left:624.29px;letter-spacing:-0.132px;">Franz.</span>
<div class="vl" style="left:772px;top:438px;height:38px"></div>
<div class="hc" style="left:773px;top:418px;width:151px;height:20px;"></div>
<span class="t" id="lh5" style="top:421px;left:774.84px;letter-spacing:0.402px;">Spanisch</span>
<div class="vl" style="left:923px;top:438px;height:38px"></div>
<div class="hc" style="left:924px;top:418px;width:151px;height:20px;"></div>
<span class="t" id="lh6" style="top:421px;left:925.86px;letter-spacing:0.251px;">Italienisch</span>
<div class="vl" style="left:1074px;top:438px;height:38px"></div>
<div class="hc" style="left:1075px;top:418px;width:78px;height:20px;"></div>
<span class="t" id="lh7" style="top:421px;left:1077.46px;letter-spacing:0.248px;">angelegt</span>
<div class="vl" style="left:1152px;top:438px;height:38px"></div>
<div class="hc" style="left:1153px;top:418px;width:131px;height:20px;"></div>
<span class="t" id="lh8" style="top:421px;left:1155.28px;letter-spacing:0.500px;">am</span>
<div class="vl" style="left:1283px;top:438px;height:38px"></div>
<div class="hc" style="left:1284px;top:418px;width:63px;height:20px;"></div>
<span class="t" id="lh9" style="top:421px;left:1286.2px;letter-spacing:0.164px;">geändert</span>
<div class="vl" style="left:1346px;top:438px;height:38px"></div>
<div class="hc" style="left:1347px;top:418px;width:52px;height:20px;border-right:none;"></div>
<span class="t" id="lh10" style="top:421px;left:1349.46px;letter-spacing:0.500px;">am</span>
<div class="hc" style="left:257px;top:438px;width:12px;height:19px"></div>
<div class="hl" style="left:269px;top:456px;width:1130px"></div>
<div class="cb" style="left:285px;top:439px"></div>
<div class="hc" style="left:257px;top:457px;width:12px;height:19px"></div>
<div class="hl" style="left:269px;top:475px;width:1130px"></div>
<div class="cb" style="left:285px;top:458px"></div>
<svg class="a" style="left:260px;top:441px" width="7" height="12" viewBox="0 0 7 12"><path d="M0.500 0.500 6.300 6 0.500 11.500z" fill="#000"/></svg>
<span class="t" id="l0a" style="top:441px;left:322.48px;letter-spacing:0.203px;">grün</span>
<span class="t" id="l0b" style="top:441px;left:1077.5px;letter-spacing:0.168px;">admin</span>
<span class="t" id="l0c" style="top:441px;left:1155.25px;letter-spacing:0.117px;">04.10.2021</span>
<span class="t" id="l0d" style="top:441px;left:1286.08px;letter-spacing:0.444px;">admin</span>
<div class="a" style="left:1347px;top:440px;width:51px;height:16px;overflow:hidden"><span class="t" id="l0e" style="left:2.25px;top:1px;letter-spacing:0.117px">04.10.2021</span></div>
<span class="t" id="l1a" style="top:460px;left:322.19px;letter-spacing:-0.245px;">rot</span>
<span class="t" id="l1b" style="top:460px;left:1077.5px;letter-spacing:0.168px;">admin</span>
<span class="t" id="l1c" style="top:460px;left:1155.25px;letter-spacing:0.117px;">04.10.2021</span>
<span class="t" id="l1d" style="top:460px;left:1286.08px;letter-spacing:0.444px;">admin</span>
<div class="a" style="left:1347px;top:459px;width:51px;height:16px;overflow:hidden"><span class="t" id="l1e" style="left:2.25px;top:1px;letter-spacing:0.117px">04.10.2021</span></div>
<div class="a" style="left:1399px;top:418px;width:16px;height:287px;background:#f0f0f0"></div>
<div class="a" style="left:1399px;top:435px;width:15px;height:168px;background:#cdcdcd"></div>
<svg class="a" style="left:1403px;top:424px" width="8" height="6" viewBox="0 0 8 6"><path d="M0.500 4.800 4 1.300 7.500 4.800" fill="none" stroke="#5c5c5c" stroke-width="1.700"/></svg>
<svg class="a" style="left:1403px;top:692px" width="8" height="6" viewBox="0 0 8 6"><path d="M0.500 1.200 4 4.700 7.500 1.200" fill="none" stroke="#5c5c5c" stroke-width="1.700"/></svg>
<div class="a" style="left:257px;top:705px;width:1158px;height:16px;background:#f0f0f0"></div>
<div class="a" style="left:274px;top:705px;width:17px;height:16px;background:#cdcdcd"></div>
<svg class="a" style="left:262px;top:709px" width="6" height="8" viewBox="0 0 6 8"><path d="M4.800 0.500 1.300 4 4.800 7.500" fill="none" stroke="#5c5c5c" stroke-width="1.700"/></svg>
<svg class="a" style="left:1387px;top:709px" width="6" height="8" viewBox="0 0 6 8"><path d="M1.200 0.500 4.700 4 1.200 7.500" fill="none" stroke="#5c5c5c" stroke-width="1.700"/></svg>
<svg class="a" style="left:1404px;top:711px" width="8" height="8" viewBox="0 0 8 8" shape-rendering="crispEdges"><rect x="6" y="0" width="2" height="2" fill="#bcbcbc"/><rect x="3" y="3" width="2" height="2" fill="#bcbcbc"/><rect x="6" y="3" width="2" height="2" fill="#bcbcbc"/><rect x="0" y="6" width="2" height="2" fill="#bcbcbc"/><rect x="3" y="6" width="2" height="2" fill="#bcbcbc"/><rect x="6" y="6" width="2" height="2" fill="#bcbcbc"/></svg>
</body></html>
